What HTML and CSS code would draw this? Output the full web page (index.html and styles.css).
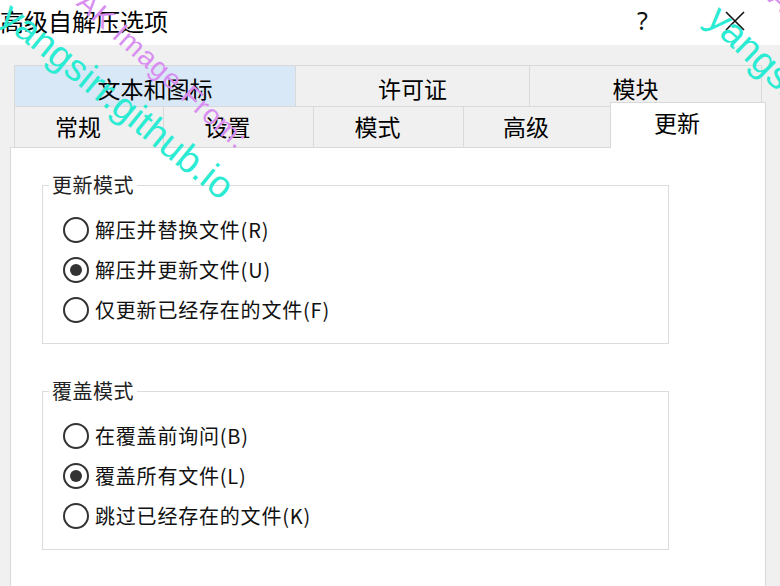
FILE: index.html
```html
<!DOCTYPE html>
<html lang="zh-CN">
<head>
<meta charset="utf-8">
<title>高级自解压选项</title>
<link rel="stylesheet" href="styles.css">
</head>
<body>
<div class="dialog">
  <div class="titlebar">
    <div class="title">高级自解压选项</div>
    <div class="help">?</div>
    <div class="close">
      <svg width="20" height="20" viewBox="0 0 20 20"><path d="M1 1 L19 19 M19 1 L1 19" stroke="#111" stroke-width="1.6" fill="none"/></svg>
    </div>
  </div>
  <div class="body">
    <div class="tabs">
      <div class="tabrow row1">
        <div class="tab hover w281">文本和图标</div>
        <div class="tab w234">许可证</div>
        <div class="tab w233 last shift">模块</div>
      </div>
      <div class="tabrow row2">
        <div class="tab w149">常规</div>
        <div class="tab w150">设置</div>
        <div class="tab w150">模式</div>
        <div class="tab w147">高级</div>
        <div class="tab selected w156">更新</div>
      </div>
    </div>
    <div class="panel">
      <div class="group">
        <span class="legend">更新模式</span>
        <div class="radio"><span class="circle"></span><span class="label">解压并替换文件(R)</span></div>
        <div class="radio"><span class="circle checked"></span><span class="label">解压并更新文件(U)</span></div>
        <div class="radio"><span class="circle"></span><span class="label">仅更新已经存在的文件(F)</span></div>
      </div>
      <div class="group second">
        <span class="legend">覆盖模式</span>
        <div class="radio"><span class="circle"></span><span class="label">在覆盖前询问(B)</span></div>
        <div class="radio"><span class="circle checked"></span><span class="label">覆盖所有文件(L)</span></div>
        <div class="radio"><span class="circle"></span><span class="label">跳过已经存在的文件(K)</span></div>
      </div>
    </div>
  </div>
  <div class="wm wm-cyan wm1">yangsirr.github.io</div>
  <div class="wm wm-pink wm2">AK Image From:</div>
  <div class="wm wm-cyan wm3">yangsirr.github.io</div>
  <div class="wm wm-pink wm4">AK Image From:</div>
</div>
</body>
</html>
```
FILE: styles.css
```css
* { box-sizing: border-box; }
html, body { margin: 0; padding: 0; }
body {
  width: 780px;
  height: 586px;
  overflow: hidden;
  background: #f0f0f0;
  font-family: "Noto Sans CJK SC", "Noto Sans", sans-serif;
  color: #000;
}
.dialog {
  position: relative;
  width: 780px;
  height: 586px;
  overflow: hidden;
  display: flex;
  flex-direction: column;
}
.titlebar {
  height: 45px;
  background: #fff;
  display: flex;
  align-items: center;
  flex-shrink: 0;
}
.title {
  font-size: 24px;
  line-height: 45px;
  margin-top: -4px;
  flex: 1;
  color: #000;
}
.help {
  font-family: "Noto Sans", sans-serif;
  font-size: 25px;
  line-height: 45px;
  margin-top: -4px;
  width: 14px;
  margin-right: 74px;
  color: #111;
}
.close {
  width: 20px;
  height: 20px;
  margin-right: 35px;
  margin-top: -4px;
}
.close svg { display: block; }
.body {
  flex: 1;
  display: flex;
  flex-direction: column;
  padding-top: 20px;
}
.tabs {
  margin-left: 14px;
  display: flex;
  flex-direction: column;
}
.tabrow {
  display: flex;
  height: 41px;
}
.row2 { align-items: flex-end; }
.tab {
  height: 41px;
  border-left: 1px solid #d9d9d9;
  border-top: 1px solid #d9d9d9;
  background: #f0f0f0;
  font-size: 23px;
  line-height: 40px;
  text-align: center;
  padding-top: 2px;
}
.row2 .tab {
  line-height: 38px;
  padding-top: 0;
  padding-right: 22px;
}
.tab.shift { padding-right: 20px; }
.tab.last { border-right: 1px solid #d9d9d9; }
.tab.hover { background: #d9e8f7; }
.row2 .tab.selected {
  height: 46px;
  margin-bottom: -1px;
  background: #fff;
  border-right: 1px solid #d9d9d9;
  position: relative;
  z-index: 2;
  line-height: 39px;
  padding-right: 22px;
}
.w281 { width: 281px; }
.w234 { width: 234px; }
.w233 { width: 233px; }
.w149 { width: 149px; }
.w150 { width: 150px; }
.w147 { width: 147px; }
.w156 { width: 156px; }
.panel {
  margin-left: 10px;
  width: 756px;
  flex: 1;
  background: #fff;
  border: 1px solid #d9d9d9;
  border-bottom: none;
  padding: 37px 0 0 31px;
  position: relative;
  z-index: 1;
}
.group {
  position: relative;
  width: 627px;
  height: 159px;
  border: 1px solid #dcdcdc;
  padding: 24px 0 0 20px;
}
.group.second { margin-top: 47px; }
.legend {
  position: absolute;
  left: 6px;
  top: -14px;
  background: #fff;
  padding: 0 3px;
  font-size: 20px;
  line-height: 26px;
  letter-spacing: 0.5px;
  color: #222;
}
.radio {
  display: flex;
  align-items: center;
  height: 40px;
}
.circle {
  width: 26px;
  height: 26px;
  border: 2px solid #333;
  border-radius: 50%;
  flex-shrink: 0;
  display: flex;
  align-items: center;
  justify-content: center;
}
.circle.checked::after {
  content: "";
  width: 12px;
  height: 12px;
  border-radius: 50%;
  background: #333;
}
.label {
  margin-left: 6px;
  font-size: 20px;
  letter-spacing: 0.8px;
  color: #111;
  line-height: 26px;
}
.wm {
  position: absolute;
  white-space: nowrap;
  transform-origin: 0 0;
  pointer-events: none;
  z-index: 10;
  font-family: "Liberation Sans", sans-serif;
}
.wm-cyan {
  color: #2cebd3;
  font-size: 38px;
}
.wm-pink {
  color: #d88ef0;
  font-size: 28px;
  letter-spacing: 1px;
}
.wm1 { left: 19px; top: -6px; transform: rotate(39deg); }
.wm2 { left: 92px; top: -14px; transform: rotate(42deg); }
.wm3 { left: 728px; top: -3px; transform: rotate(44deg); }
.wm4 { left: 784px; top: -18px; transform: rotate(42deg); }
```
